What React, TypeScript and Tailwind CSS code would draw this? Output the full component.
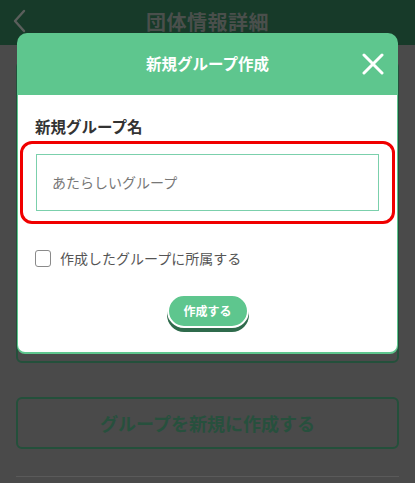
import { useState } from 'react';

// Page behind the dialog, dimmed by the overlay
function BackgroundPage() {
  return (
    <div className="flex flex-col h-full">
      <header className="relative h-[45px] bg-[#173a29] flex items-center justify-center">
        <svg className="absolute left-[13px] top-[9px]" width="14" height="24" viewBox="0 0 14 24" fill="none">
          <path d="M11 2 L2 12 L11 22" stroke="#5b5f5c" strokeWidth="2.4" strokeLinecap="round" strokeLinejoin="round" />
        </svg>
        <h1 className="text-[20px] font-bold text-[#4a4f4c] tracking-wide -mt-[2px]">団体情報詳細</h1>
      </header>
      <div className="flex-1 flex flex-col px-4 pt-4">
        <div className="h-[302px] rounded-md border-2 border-[#24503b]" />
        <button className="mt-[34px] h-[52px] rounded-md border-2 border-[#24503b] text-[18px] font-bold text-[#27503d]">
          グループを新規に作成する
        </button>
        <div className="mt-[27px] border-t border-[#5a5a5a]" />
      </div>
    </div>
  );
}

export default function App() {
  const [name, setName] = useState('');
  const [join, setJoin] = useState(false);

  return (
    <div
      className="relative w-[415px] h-[483px] overflow-hidden bg-[#4a4a4a]"
      style={{ fontFamily: '"Noto Sans CJK JP", "Noto Sans", sans-serif' }}
    >
      <BackgroundPage />

      {/* Modal dialog */}
      <div className="absolute left-[17px] top-[33px] w-[381px] rounded-t-[10px] rounded-b-[8px] bg-[#5ec68e] pb-[2px] px-[1px] overflow-hidden">
        <div className="relative h-[62px] flex items-center justify-center">
          <h2 className="text-[15.5px] font-bold text-white">新規グループ作成</h2>
          <button className="absolute right-[13px] top-[20px]">
            <svg width="22" height="22" viewBox="0 0 22 22">
              <path d="M2 2 L20 20 M20 2 L2 20" stroke="#fff" strokeWidth="3" strokeLinecap="round" />
            </svg>
          </button>
        </div>
        <div className="bg-white rounded-b-[7px] px-[17px] pt-[24px] pb-[24px] flex flex-col">
          <label className="text-[15.5px] font-bold text-[#333] leading-none">新規グループ名</label>
          <div className="mt-[6px] -mx-[15px] rounded-[12px] border-[3px] border-[#f00000] px-[13px] py-[10px]">
            <input
              value={name}
              onChange={(e) => setName(e.target.value)}
              placeholder="あたらしいグループ"
              className="w-full h-[57px] border border-[#7bd0ac] px-[15px] text-[14px] text-[#333] placeholder:text-[#777] outline-none"
            />
          </div>
          <label className="mt-[24px] flex items-center gap-[9px] cursor-pointer">
            <span
              onClick={() => setJoin(!join)}
              className={`w-[16px] h-[17px] rounded-[3px] border border-[#8a8a8a] ${join ? 'bg-[#5ec68e]' : 'bg-white'}`}
            />
            <span className="text-[14px] text-[#555]">作成したグループに所属する</span>
          </label>
          <div className="mt-[25px] flex justify-center">
            <button className="w-[82px] h-[34px] rounded-full bg-[#5ec68e] border-2 border-white shadow-[0_4px_0_#2f6b4c] text-[12px] font-bold text-white">
              作成する
            </button>
          </div>
        </div>
      </div>
    </div>
  );
}
